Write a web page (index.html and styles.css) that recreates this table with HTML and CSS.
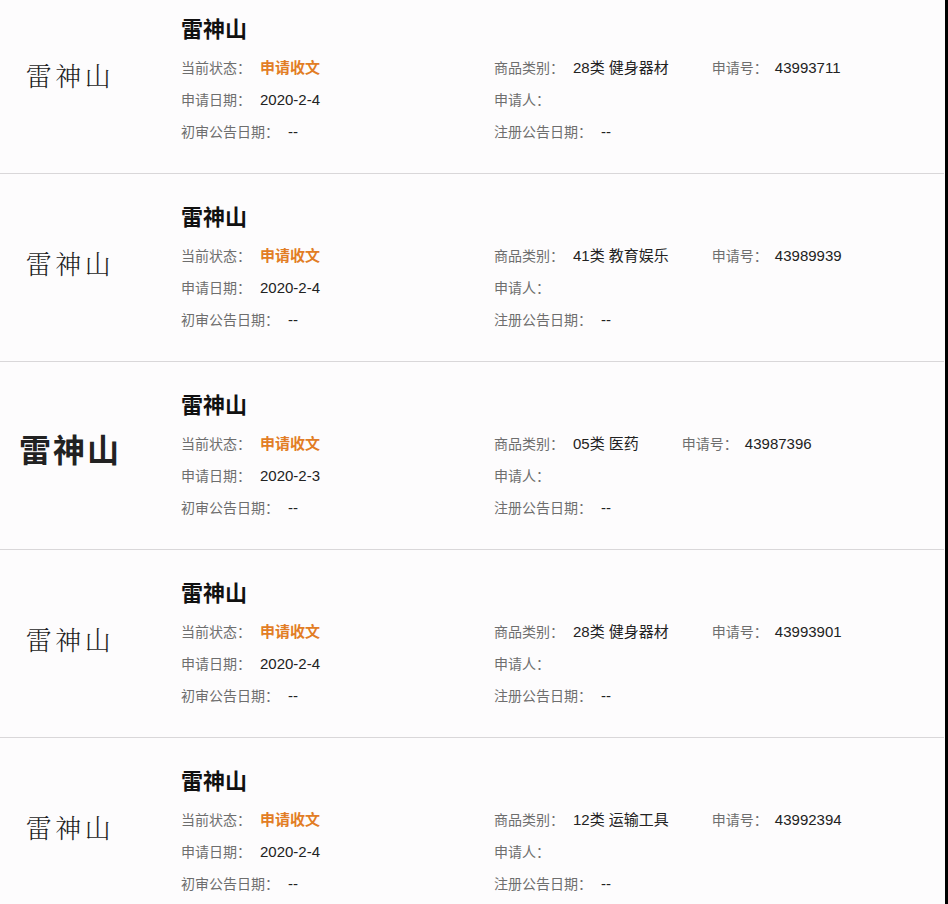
FILE: index.html
```html
<!DOCTYPE html>
<html lang="zh-CN">
<head>
<meta charset="utf-8">
<title>商标列表</title>
<link rel="stylesheet" href="styles.css">
</head>
<body>
<div class="page">
  <div class="list">
    <div class="item">
      <div class="logo">雷神山</div>
      <div class="info">
        <div class="title">雷神山</div>
        <div class="grid">
          <div class="cell"><span class="label">当前状态：</span><span class="val status">申请收文</span></div>
          <div class="cell"><span class="label">商品类别：</span><span class="val">28类 健身器材</span><span class="label regno">申请号：</span><span class="val">43993711</span></div>
          <div class="cell"><span class="label">申请日期：</span><span class="val">2020-2-4</span></div>
          <div class="cell"><span class="label">申请人：</span></div>
          <div class="cell"><span class="label">初审公告日期：</span><span class="val">--</span></div>
          <div class="cell"><span class="label">注册公告日期：</span><span class="val">--</span></div>
        </div>
      </div>
    </div>
    <div class="item">
      <div class="logo">雷神山</div>
      <div class="info">
        <div class="title">雷神山</div>
        <div class="grid">
          <div class="cell"><span class="label">当前状态：</span><span class="val status">申请收文</span></div>
          <div class="cell"><span class="label">商品类别：</span><span class="val">41类 教育娱乐</span><span class="label regno">申请号：</span><span class="val">43989939</span></div>
          <div class="cell"><span class="label">申请日期：</span><span class="val">2020-2-4</span></div>
          <div class="cell"><span class="label">申请人：</span></div>
          <div class="cell"><span class="label">初审公告日期：</span><span class="val">--</span></div>
          <div class="cell"><span class="label">注册公告日期：</span><span class="val">--</span></div>
        </div>
      </div>
    </div>
    <div class="item">
      <div class="logo logo-bold">雷神山</div>
      <div class="info">
        <div class="title">雷神山</div>
        <div class="grid">
          <div class="cell"><span class="label">当前状态：</span><span class="val status">申请收文</span></div>
          <div class="cell"><span class="label">商品类别：</span><span class="val">05类 医药</span><span class="label regno">申请号：</span><span class="val">43987396</span></div>
          <div class="cell"><span class="label">申请日期：</span><span class="val">2020-2-3</span></div>
          <div class="cell"><span class="label">申请人：</span></div>
          <div class="cell"><span class="label">初审公告日期：</span><span class="val">--</span></div>
          <div class="cell"><span class="label">注册公告日期：</span><span class="val">--</span></div>
        </div>
      </div>
    </div>
    <div class="item">
      <div class="logo">雷神山</div>
      <div class="info">
        <div class="title">雷神山</div>
        <div class="grid">
          <div class="cell"><span class="label">当前状态：</span><span class="val status">申请收文</span></div>
          <div class="cell"><span class="label">商品类别：</span><span class="val">28类 健身器材</span><span class="label regno">申请号：</span><span class="val">43993901</span></div>
          <div class="cell"><span class="label">申请日期：</span><span class="val">2020-2-4</span></div>
          <div class="cell"><span class="label">申请人：</span></div>
          <div class="cell"><span class="label">初审公告日期：</span><span class="val">--</span></div>
          <div class="cell"><span class="label">注册公告日期：</span><span class="val">--</span></div>
        </div>
      </div>
    </div>
    <div class="item">
      <div class="logo">雷神山</div>
      <div class="info">
        <div class="title">雷神山</div>
        <div class="grid">
          <div class="cell"><span class="label">当前状态：</span><span class="val status">申请收文</span></div>
          <div class="cell"><span class="label">商品类别：</span><span class="val">12类 运输工具</span><span class="label regno">申请号：</span><span class="val">43992394</span></div>
          <div class="cell"><span class="label">申请日期：</span><span class="val">2020-2-4</span></div>
          <div class="cell"><span class="label">申请人：</span></div>
          <div class="cell"><span class="label">初审公告日期：</span><span class="val">--</span></div>
          <div class="cell"><span class="label">注册公告日期：</span><span class="val">--</span></div>
        </div>
      </div>
    </div>
  </div>
  <div class="edge"></div>
</div>
</body>
</html>
```

FILE: styles.css
```css
html, body {
  margin: 0;
  padding: 0;
  background: #fdfcfd;
  height: 100%;
  overflow: hidden;
}

body {
  font-family: "Liberation Sans", "Noto Sans CJK SC", sans-serif;
  color: #333;
}

.page {
  display: flex;
  height: 904px;
  overflow: hidden;
}

.list {
  width: 944px;
  margin-top: -14px;
  flex: none;
}

.edge {
  width: 3px;
  margin-left: 1px;
  background: #000;
  flex: none;
}

.item {
  display: flex;
  align-items: center;
  height: 187px;
  border-bottom: 1px solid #d9d7d9;
}

.logo {
  width: 136px;
  flex: none;
  box-sizing: border-box;
  padding-left: 4px;
  text-align: center;
  font-family: "Noto Serif CJK SC", "Noto Sans CJK SC", serif;
  font-weight: 300;
  font-size: 26px;
  letter-spacing: 3.5px;
  color: #1e1e1e;
  margin-bottom: 10px;
}

.logo-bold {
  font-family: "Noto Sans CJK SC", sans-serif;
  font-weight: 700;
  font-size: 32px;
  letter-spacing: 2px;
  color: #222;
  margin-bottom: 16px;
}

.info {
  margin-left: 45px;
  flex: 1;
  align-self: flex-start;
  padding-top: 26px;
}

.title {
  font-family: "Noto Sans CJK SC", sans-serif;
  font-weight: 700;
  font-size: 22px;
  line-height: 30px;
  color: #111;
}

.grid {
  display: grid;
  grid-template-columns: 313px 1fr;
  margin-top: 10px;
}

.cell {
  font-size: 14px;
  line-height: 32px;
  white-space: nowrap;
}

.label {
  color: #6e6e6e;
}

.val {
  color: #222;
  font-size: 15px;
  margin-left: 9px;
}

.status {
  color: #e27d25;
  font-weight: 700;
}

.regno {
  margin-left: 43px;
}

.regno + .val {
  margin-left: 7px;
}
```
